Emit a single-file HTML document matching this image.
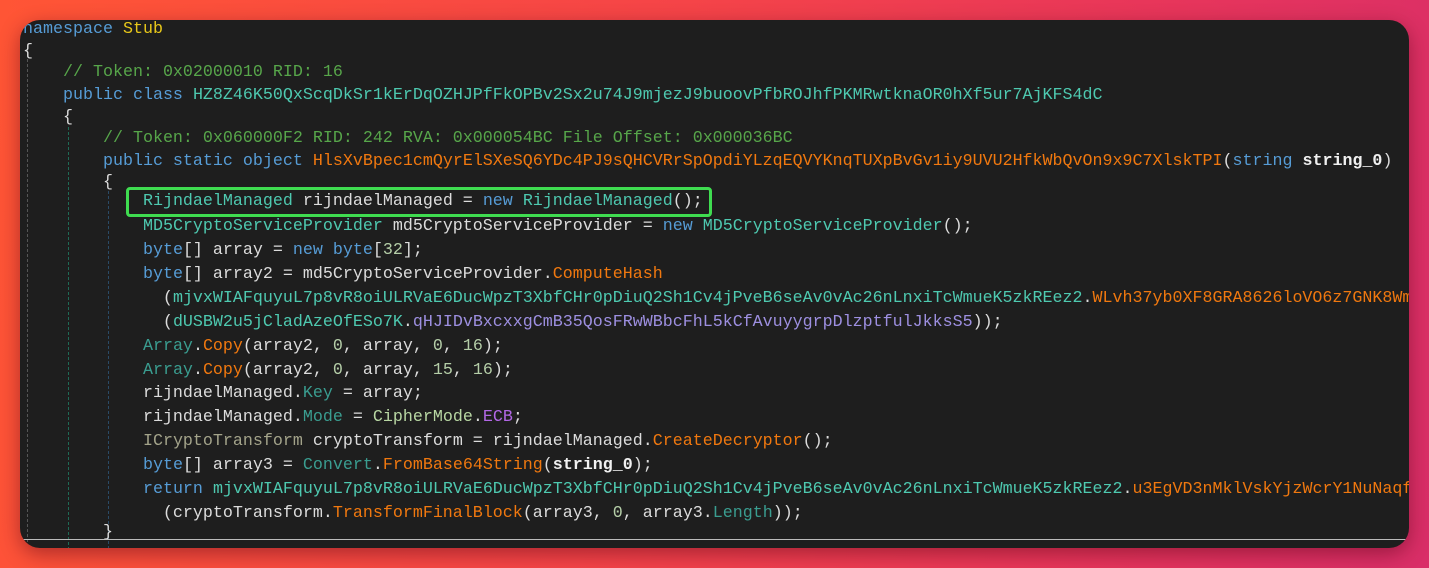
<!DOCTYPE html>
<html><head><meta charset="utf-8"><style>
html,body{margin:0;padding:0;width:1429px;height:568px;overflow:hidden}
body{background:linear-gradient(100deg,#ff5535 0%,#f54448 45%,#e8365a 75%,#d92e68 100%);position:relative}
.win{position:absolute;left:20px;top:20px;width:1389px;height:528px;background:#1e1e1e;border-radius:20px;overflow:hidden;box-shadow:0 6px 20px rgba(80,0,20,.45)}
.l{position:absolute;left:3px;height:22px;line-height:22px;white-space:pre;font-family:"Liberation Mono",monospace;font-size:16.67px;color:#dcdcdc}
.k{color:#569cd6}.c{color:#4ec9b0}.m{color:#f0780f}.g{color:#57a64a}.t{color:#3a9d90}.p{color:#b267e6}.n{color:#b5cea8}.i{color:#b8d7a3}.v{color:#9d8fe0}.y{color:#e8c81a}.w{font-weight:bold;color:#f0f0f0}
.gd{position:absolute;top:0;height:528px;border-left:1px dashed}
.box{position:absolute;left:106px;top:167px;width:580px;height:24px;border:3px solid #3fdc50;border-radius:4px}
.hr{position:absolute;left:0;right:0;top:519px;border-top:1px solid #bbb}
</style></head><body><div class="win">
<div class="gd" style="left:7px;top:29px;border-color:#555"></div>
<div class="gd" style="left:48px;top:107px;border-color:#1f6b56"></div>
<div class="gd" style="left:88px;top:171px;border-color:#2a4a66"></div>
<div class="l" style="top:-1px"><span class="k">namespace</span> <span class="y">Stub</span></div>
<div class="l" style="top:21px">{</div>
<div class="l" style="top:42px">    <span class="g">// Token: 0x02000010 RID: 16</span></div>
<div class="l" style="top:65px">    <span class="k">public class</span> <span class="c">HZ8Z46K50QxScqDkSr1kErDqOZHJPfFkOPBv2Sx2u74J9mjezJ9buoovPfbROJhfPKMRwtknaOR0hXf5ur7AjKFS4dC</span></div>
<div class="l" style="top:87px">    {</div>
<div class="l" style="top:108px">        <span class="g">// Token: 0x060000F2 RID: 242 RVA: 0x000054BC File Offset: 0x000036BC</span></div>
<div class="l" style="top:131px">        <span class="k">public static object</span> <span class="m">HlsXvBpec1cmQyrElSXeSQ6YDc4PJ9sQHCVRrSpOpdiYLzqEQVYKnqTUXpBvGv1iy9UVU2HfkWbQvOn9x9C7XlskTPI</span>(<span class="k">string</span> <span class="w">string_0</span>)</div>
<div class="l" style="top:152px">        {</div>
<div class="l" style="top:171px">            <span class="c">RijndaelManaged</span> rijndaelManaged = <span class="k">new</span> <span class="c">RijndaelManaged</span>();</div>
<div class="l" style="top:196px">            <span class="c">MD5CryptoServiceProvider</span> md5CryptoServiceProvider = <span class="k">new</span> <span class="c">MD5CryptoServiceProvider</span>();</div>
<div class="l" style="top:220px">            <span class="k">byte</span>[] array = <span class="k">new byte</span>[<span class="n">32</span>];</div>
<div class="l" style="top:244px">            <span class="k">byte</span>[] array2 = md5CryptoServiceProvider.<span class="m">ComputeHash</span></div>
<div class="l" style="top:268px">              (<span class="c">mjvxWIAFquyuL7p8vR8oiULRVaE6DucWpzT3XbfCHr0pDiuQ2Sh1Cv4jPveB6seAv0vAc26nLnxiTcWmueK5zkREez2</span>.<span class="m">WLvh37yb0XF8GRA8626loVO6z7GNK8Wm</span></div>
<div class="l" style="top:292px">              (<span class="c">dUSBW2u5jCladAzeOfESo7K</span>.<span class="v">qHJIDvBxcxxgCmB35QosFRwWBbcFhL5kCfAvuyygrpDlzptfulJkksS5</span>));</div>
<div class="l" style="top:316px">            <span class="t">Array</span>.<span class="m">Copy</span>(array2, <span class="n">0</span>, array, <span class="n">0</span>, <span class="n">16</span>);</div>
<div class="l" style="top:340px">            <span class="t">Array</span>.<span class="m">Copy</span>(array2, <span class="n">0</span>, array, <span class="n">15</span>, <span class="n">16</span>);</div>
<div class="l" style="top:363px">            rijndaelManaged.<span class="t">Key</span> = array;</div>
<div class="l" style="top:387px">            rijndaelManaged.<span class="t">Mode</span> = <span class="i">CipherMode</span>.<span class="p">ECB</span>;</div>
<div class="l" style="top:411px">            <span style="color:#a3a38a">ICryptoTransform</span> cryptoTransform = rijndaelManaged.<span class="m">CreateDecryptor</span>();</div>
<div class="l" style="top:435px">            <span class="k">byte</span>[] array3 = <span class="t">Convert</span>.<span class="m">FromBase64String</span>(<span class="w">string_0</span>);</div>
<div class="l" style="top:459px">            <span class="k">return</span> <span class="c">mjvxWIAFquyuL7p8vR8oiULRVaE6DucWpzT3XbfCHr0pDiuQ2Sh1Cv4jPveB6seAv0vAc26nLnxiTcWmueK5zkREez2</span>.<span class="m">u3EgVD3nMklVskYjzWcrY1NuNaqf</span></div>
<div class="l" style="top:483px">              (cryptoTransform.<span class="m">TransformFinalBlock</span>(array3, <span class="n">0</span>, array3.<span class="t">Length</span>));</div>
<div class="l" style="top:502px">        }</div>
<div class="box"></div>
<div class="hr"></div>
</div></body></html>
